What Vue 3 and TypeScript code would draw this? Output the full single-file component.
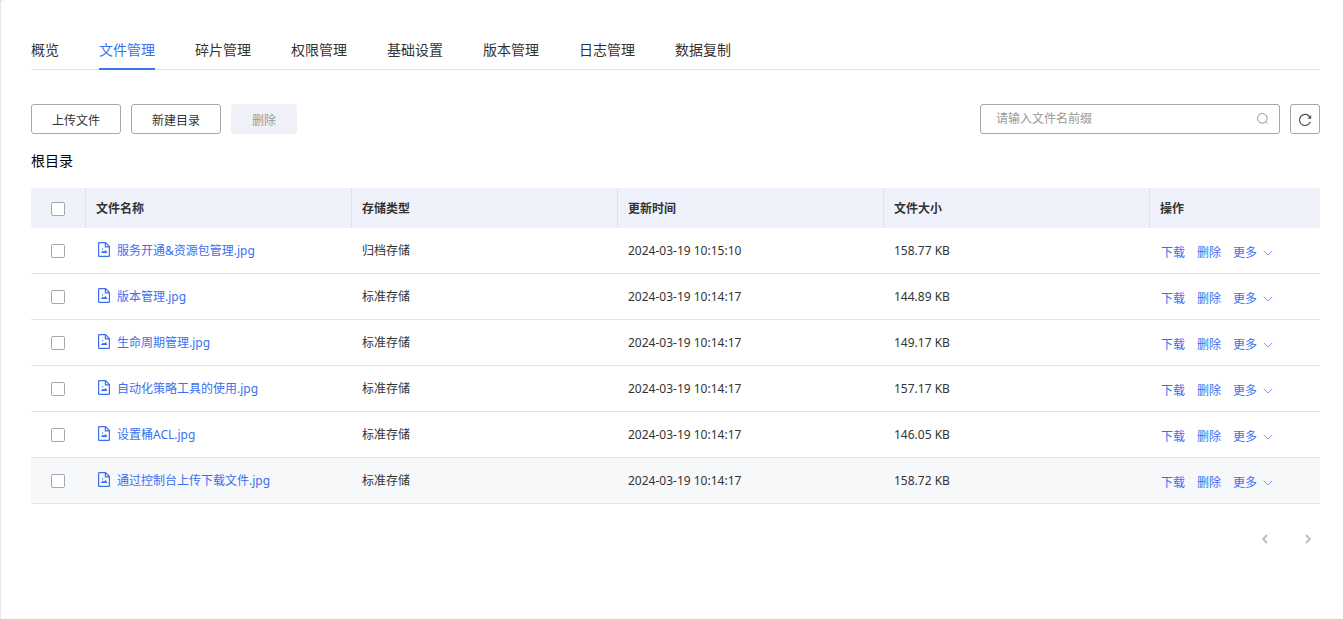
<script setup lang="ts">
import { ref, computed } from 'vue'

interface FileRow {
  name: string
  storage: string
  updated: string
  size: string
}

const tabs: string[] = ['概览', '文件管理', '碎片管理', '权限管理', '基础设置', '版本管理', '日志管理', '数据复制']
const activeTab = ref('文件管理')
const prefix = ref('')

const files: FileRow[] = [
  { name: '服务开通&资源包管理.jpg', storage: '归档存储', updated: '2024-03-19 10:15:10', size: '158.77 KB' },
  { name: '版本管理.jpg', storage: '标准存储', updated: '2024-03-19 10:14:17', size: '144.89 KB' },
  { name: '生命周期管理.jpg', storage: '标准存储', updated: '2024-03-19 10:14:17', size: '149.17 KB' },
  { name: '自动化策略工具的使用.jpg', storage: '标准存储', updated: '2024-03-19 10:14:17', size: '157.17 KB' },
  { name: '设置桶ACL.jpg', storage: '标准存储', updated: '2024-03-19 10:14:17', size: '146.05 KB' },
  { name: '通过控制台上传下载文件.jpg', storage: '标准存储', updated: '2024-03-19 10:14:17', size: '158.72 KB' },
]
const highlighted = files.length - 1

const selected = ref<string[]>([])
const allSelected = computed<boolean>({
  get: () => selected.value.length === files.length,
  set: (on) => {
    selected.value = on ? files.map((f) => f.name) : []
  },
})
</script>

<template>
  <main class="panel">
    <nav class="tabs">
      <a
        v-for="tab in tabs"
        :key="tab"
        href="#"
        class="tab"
        :class="{ active: tab === activeTab }"
        @click.prevent="activeTab = tab"
      >{{ tab }}</a>
    </nav>

    <div class="toolbar">
      <button type="button" class="btn">上传文件</button>
      <button type="button" class="btn">新建目录</button>
      <button type="button" class="btn btn-disabled" :disabled="selected.length === 0">删除</button>
      <div class="search">
        <input v-model="prefix" type="text" aria-label="请输入文件名前缀" placeholder="请输入文件名前缀" />
        <svg class="search-icon" viewBox="0 0 12 12" aria-hidden="true">
          <circle cx="5.3" cy="5.3" r="4.8" />
          <path d="M8.7 8.7L10.6 10.6" />
        </svg>
      </div>
      <button type="button" class="refresh" aria-label="刷新">
        <svg viewBox="0 0 14 14" aria-hidden="true">
          <path class="arc" d="M11.8 3.8A5.6 5.6 0 1 0 12.4 8.8" />
          <path class="head" d="M13.2 2V5.8H9.4Z" />
        </svg>
      </button>
    </div>

    <h1 class="path">根目录</h1>

    <table class="files">
      <colgroup>
        <col class="col-check" />
        <col />
        <col />
        <col />
        <col />
        <col class="col-actions" />
      </colgroup>
      <thead>
        <tr>
          <th class="check"><input v-model="allSelected" type="checkbox" aria-label="全选" /></th>
          <th>文件名称</th>
          <th>存储类型</th>
          <th>更新时间</th>
          <th>文件大小</th>
          <th>操作</th>
        </tr>
      </thead>
      <tbody>
        <tr v-for="(file, i) in files" :key="file.name" :class="{ hovered: i === highlighted }">
          <td class="check"><input v-model="selected" type="checkbox" :value="file.name" :aria-label="file.name" /></td>
          <td>
            <a href="#" class="file" @click.prevent>
              <svg viewBox="0 0 12 15" aria-hidden="true">
                <path class="outline" d="M7.5 .6H1.2Q.6 .6 .6 1.2V13.8Q.6 14.4 1.2 14.4H10.8Q11.4 14.4 11.4 13.8V4.6Z" />
                <path class="outline" d="M7.4 .8V4.8H11.2" />
                <path class="fill" d="M2.8 11L4.8 8.8L6 9.6L7.8 8L9.4 11Z" />
                <rect class="fill" x="4" y="6.2" width="1.2" height="1.2" />
              </svg>
              <span>{{ file.name }}</span>
            </a>
          </td>
          <td>{{ file.storage }}</td>
          <td>{{ file.updated }}</td>
          <td>{{ file.size }}</td>
          <td>
            <div class="actions">
              <a href="#" @click.prevent>下载</a>
              <a href="#" @click.prevent>删除</a>
              <button type="button" class="more">
                更多
                <svg viewBox="0 0 10 6" aria-hidden="true"><path d="M.8 .8L5 5L9.2 .8" /></svg>
              </button>
            </div>
          </td>
        </tr>
      </tbody>
    </table>

    <div class="pager">
      <button type="button" aria-label="上一页">
        <svg viewBox="0 0 6 10" aria-hidden="true"><path d="M5 1L1.2 5L5 9" /></svg>
      </button>
      <button type="button" aria-label="下一页">
        <svg viewBox="0 0 6 10" aria-hidden="true"><path d="M1 1L4.8 5L1 9" /></svg>
      </button>
    </div>
  </main>
</template>

<style>
body {
  background: #e4e6ee;
}
</style>

<style scoped>
* {
  box-sizing: border-box;
}

.panel {
  min-height: 100vh;
  margin-left: 1px;
  padding: 32px 23px 32px 30px;
  border-top-left-radius: 4px;
  background: #fff;
  color: #333;
  font-family: "Noto Sans", "Noto Sans CJK SC", sans-serif;
  font-size: 12px;
  line-height: 20px;
}

button,
input {
  margin: 0;
  font: inherit;
}

button {
  cursor: pointer;
}

a {
  color: #3a6ff2;
  text-decoration: none;
}

svg {
  display: block;
  fill: none;
}

.tabs {
  display: flex;
  gap: 40px;
  box-shadow: inset 0 -1px #e1e3eb;
}

.tab {
  height: 38px;
  color: #333;
  font-size: 14px;
  line-height: 36px;
  border-bottom: 2px solid transparent;
}

.tab.active {
  color: #3a6ff2;
  border-bottom-color: #3a76f0;
}

.toolbar {
  display: flex;
  gap: 10px;
  margin-top: 34px;
}

.btn {
  height: 30px;
  padding: 4px 20px 0;
  border: 1px solid #a3a6b3;
  border-radius: 3px;
  background: #fff;
  color: #333;
}

.btn-disabled {
  border-color: #f0f1f8;
  background: #f0f1f8;
  color: #999;
}

.search {
  display: flex;
  align-items: center;
  width: 300px;
  height: 30px;
  margin-left: auto;
  padding: 0 10px 0 15px;
  border: 1px solid #a3a6b3;
  border-radius: 3px;
}

.search input {
  flex: 1;
  min-width: 0;
  padding: 0;
  border: 0;
  outline: 0;
  background: none;
  color: #333;
}

.search input::placeholder {
  color: #999;
  opacity: 1;
}

.search-icon {
  width: 12px;
  height: 12px;
  stroke: #8f939f;
}

.refresh {
  display: grid;
  place-items: center;
  width: 30px;
  height: 30px;
  padding: 1px 0 0;
  border: 1px solid #a3a6b3;
  border-radius: 3px;
  background: #fff;
}

.refresh svg {
  width: 14px;
  height: 14px;
}

.refresh .arc {
  stroke: #555;
  stroke-width: 1.2;
}

.refresh .head {
  fill: #555;
}

.path {
  margin: 17px 0;
  color: #000;
  font-size: 14px;
  font-weight: 400;
  line-height: 20px;
}

.files {
  width: 100%;
  table-layout: fixed;
  border-collapse: separate;
  border-spacing: 0;
}

.col-check {
  width: 55px;
}

.col-actions {
  width: 170px;
}

th,
td {
  padding: 0 10px;
  text-align: left;
  vertical-align: middle;
}

th {
  height: 40px;
  padding-top: 2px;
  border-right: 1px solid #dfe1eb;
  background: #f0f2fb;
  font-weight: 700;
}

th:first-child {
  border-top-left-radius: 3px;
  border-bottom-left-radius: 3px;
}

th:last-child {
  border-right: 0;
  border-top-right-radius: 3px;
  border-bottom-right-radius: 3px;
}

td {
  height: 46px;
  border-bottom: 1px solid #e1e3eb;
}

.hovered td {
  background: #f6f8fa;
}

.check {
  padding-left: 20px;
}

.check input {
  display: block;
  width: 14px;
  height: 14px;
  appearance: none;
  border: 1px solid #a3a6b3;
  border-radius: 2px;
  background: #fff;
}

.check input:checked {
  border-color: #3a76f0;
  background: #3a76f0;
}

.file {
  display: flex;
  align-items: center;
  gap: 7px;
  padding-left: 2px;
}

.file svg {
  width: 12px;
  height: 15px;
  margin-bottom: 2px;
}

.file .outline {
  stroke: #3a6ff2;
  stroke-width: 1.2;
}

.file .fill {
  fill: #3a6ff2;
}

.actions {
  display: flex;
  gap: 12px;
  padding: 5px 0 0 1px;
}

.more {
  display: flex;
  align-items: center;
  gap: 6px;
  padding: 0;
  border: 0;
  background: none;
  color: #3a6ff2;
}

.more svg {
  width: 10px;
  height: 6px;
  stroke: #7b9ff6;
}

.pager {
  display: flex;
  justify-content: flex-end;
  gap: 19px;
  margin-top: 23px;
}

.pager button {
  display: grid;
  place-items: center;
  width: 24px;
  height: 24px;
  padding: 0;
  border: 0;
  background: none;
}

.pager svg {
  width: 6px;
  height: 10px;
  stroke: #bcc0cb;
  stroke-width: 2;
}
</style>
